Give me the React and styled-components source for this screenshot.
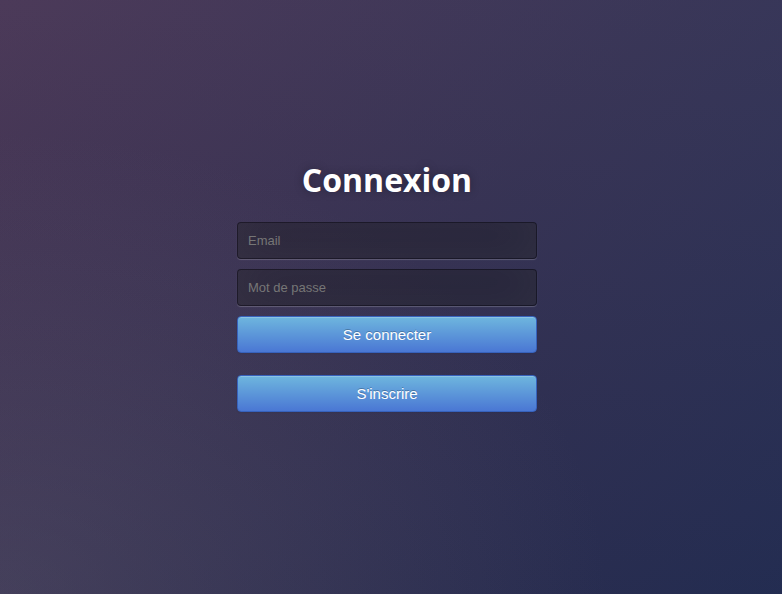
import React from "react";
import styled, { createGlobalStyle } from "styled-components";

const Global = createGlobalStyle`
  html, body { margin: 0; padding: 0; height: 100%; }
  body {
    font-family: "Liberation Sans", Arial, sans-serif;
    background:
      radial-gradient(ellipse at 0% 100%, rgba(110, 112, 130, 0.28) 0%, rgba(110, 112, 130, 0) 55%),
      linear-gradient(to bottom, rgba(70, 90, 130, 0.18) 0%, rgba(20, 30, 60, 0.15) 100%),
      linear-gradient(135deg, #4d3350 0%, #372f4f 50%, #262f55 100%);
    background-attachment: fixed;
  }
  #root { height: 100%; }
`;

const Page = styled.div`
  min-height: 100vh;
  box-sizing: border-box;
  padding-right: 8px;
  display: flex;
  align-items: center;
  justify-content: center;
`;

const Box = styled.div`
  width: 300px;
  height: 300px;
  display: flex;
  flex-direction: column;
`;

const Title = styled.h1`
  margin: 8px 0 18px;
  font-family: "Open Sans", sans-serif;
  font-weight: 700;
  font-size: 32px;
  line-height: 49px;
  color: #fff;
  text-align: center;
  text-shadow: 0 0 10px rgba(0, 0, 0, 0.3);
`;

const Form = styled.form`
  display: flex;
  flex-direction: column;
  margin: 0 0 22px;
`;

const Input = styled.input`
  box-sizing: border-box;
  width: 100%;
  height: 37px;
  margin: 0 0 10px;
  padding: 10px;
  font-family: "Liberation Sans", Arial, sans-serif;
  font-size: 13px;
  color: #fff;
  background: rgba(0, 0, 0, 0.3);
  border: 1px solid rgba(0, 0, 0, 0.3);
  border-radius: 4px;
  outline: none;
  box-shadow: inset 0 -5px 45px rgba(100, 100, 100, 0.2), 0 1px 1px rgba(255, 255, 255, 0.2);
  &::placeholder { color: #767676; }
`;

const Button = styled.button`
  box-sizing: border-box;
  width: 100%;
  height: 37px;
  padding: 0 14px;
  font-family: "Liberation Sans", Arial, sans-serif;
  font-size: 15px;
  color: #fff;
  text-shadow: 0 -1px 0 rgba(0, 0, 0, 0.25);
  background: linear-gradient(to bottom, #6eb6de, #4a77d4);
  border: 1px solid #3762bc;
  border-radius: 4px;
  box-shadow: inset 0 1px 0 rgba(255, 255, 255, 0.2), 0 1px 2px rgba(0, 0, 0, 0.05);
  cursor: pointer;
`;

export default function App() {
  return (
    <>
      <Global />
      <Page>
        <Box>
          <Title>Connexion</Title>
          <Form onSubmit={(e) => e.preventDefault()}>
            <Input type="email" placeholder="Email" />
            <Input type="password" placeholder="Mot de passe" />
            <Button type="submit">Se connecter</Button>
          </Form>
          <Button type="button">S'inscrire</Button>
        </Box>
      </Page>
    </>
  );
}
